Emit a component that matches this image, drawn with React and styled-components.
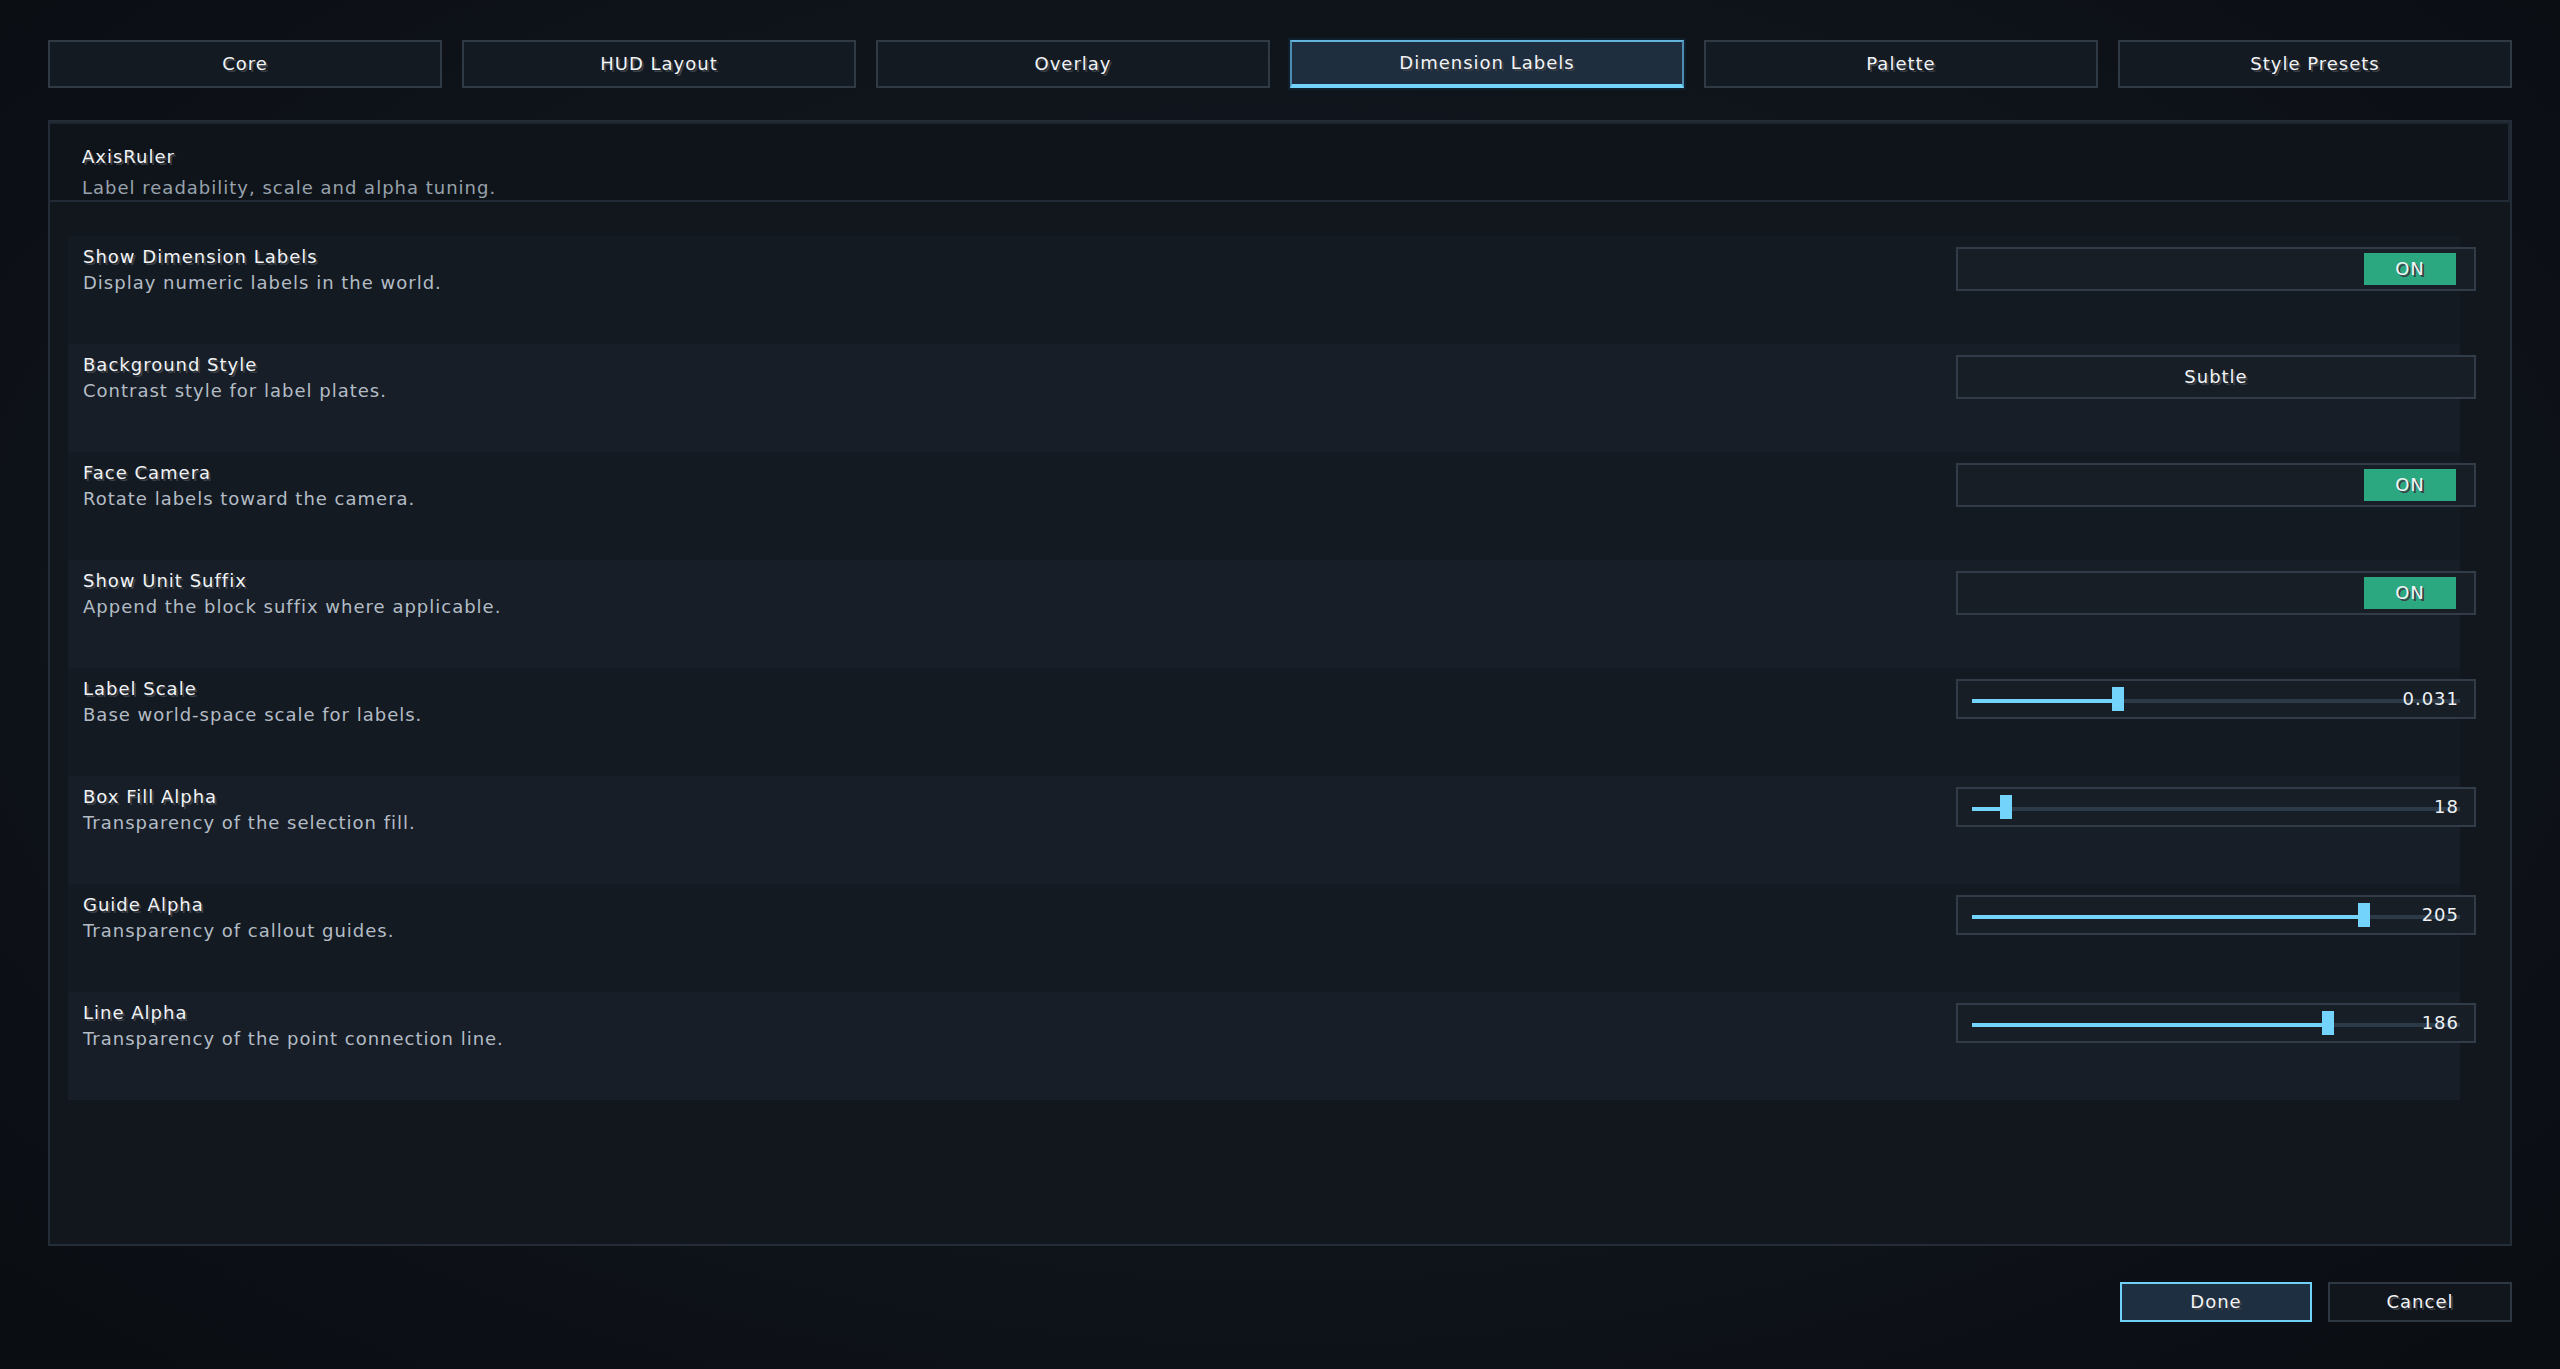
import React from 'react';
import styled, { createGlobalStyle, css } from 'styled-components';

//Page defaults
const GlobalStyle = createGlobalStyle`
   html, body {
      margin: 0;
      padding: 0;
      background: #0c1015;
   }
   * {
      box-sizing: border-box;
   }
`;

const tabs = ['Core', 'HUD Layout', 'Overlay', 'Dimension Labels', 'Palette', 'Style Presets'];

const settings = [
   { title: 'Show Dimension Labels', desc: 'Display numeric labels in the world.', type: 'toggle', value: 'ON' },
   { title: 'Background Style', desc: 'Contrast style for label plates.', type: 'cycle', value: 'Subtle' },
   { title: 'Face Camera', desc: 'Rotate labels toward the camera.', type: 'toggle', value: 'ON' },
   { title: 'Show Unit Suffix', desc: 'Append the block suffix where applicable.', type: 'toggle', value: 'ON' },
   { title: 'Label Scale', desc: 'Base world-space scale for labels.', type: 'slider', value: '0.031', fill: 0.3 },
   { title: 'Box Fill Alpha', desc: 'Transparency of the selection fill.', type: 'slider', value: '18', fill: 18 / 255 },
   { title: 'Guide Alpha', desc: 'Transparency of callout guides.', type: 'slider', value: '205', fill: 205 / 255 },
   { title: 'Line Alpha', desc: 'Transparency of the point connection line.', type: 'slider', value: '186', fill: 186 / 255 },
];

const Control = ({ item }) => {
   if (item.type === 'toggle') {
      return (
         <ToggleBox>
            <OnPill>{item.value}</OnPill>
         </ToggleBox>
      );
   }
   if (item.type === 'cycle') {
      return <CycleBox>{item.value}</CycleBox>;
   }
   return (
      <SliderBox>
         <Track>
            <Fill style={{ width: `${item.fill * 100}%` }} />
            <Thumb style={{ left: `calc(${item.fill * 100}% - 6px)` }} />
         </Track>
         <Value>{item.value}</Value>
      </SliderBox>
   );
};

const App = () => {
   const active = 'Dimension Labels';

   return (
      <>
         <GlobalStyle />
         <Screen>
            <TabBar>
               {tabs.map((name) => (
                  <Tab key={name} $active={name === active}>
                     {name}
                  </Tab>
               ))}
            </TabBar>
            <Panel>
               <Header>
                  <HeaderTitle>AxisRuler</HeaderTitle>
                  <HeaderDesc>Label readability, scale and alpha tuning.</HeaderDesc>
               </Header>
               <List>
                  {settings.map((item, i) => (
                     <Row key={item.title} $odd={i % 2 === 1}>
                        <Label>
                           <Title>{item.title}</Title>
                           <Desc>{item.desc}</Desc>
                        </Label>
                        <Control item={item} />
                     </Row>
                  ))}
               </List>
            </Panel>
            <Footer>
               <Button $primary>Done</Button>
               <Button $width={184}>Cancel</Button>
            </Footer>
         </Screen>
      </>
   );
};

const pixelText = css`
   font-family: 'DejaVu Sans', 'Liberation Sans', sans-serif;
   font-size: 18px;
   letter-spacing: 1px;
   line-height: 26px;
`;

const shadow = css`
   text-shadow: 2px 2px 0 #3c4047;
`;

const Screen = styled.div`
   ${pixelText};
   height: 100vh;
   display: flex;
   flex-direction: column;
   padding: 40px 48px 47px;
   background: radial-gradient(ellipse at 50% 45%, #131a23 0%, #0f141b 55%, #0a0d12 100%);
   color: #f2f4f6;
`;

const TabBar = styled.div`
   display: flex;
   gap: 20px;
   height: 48px;
`;

const Tab = styled.div`
   flex: 1;
   display: flex;
   align-items: center;
   justify-content: center;
   background: #131a22;
   border: 2px solid #2f3a45;
   ${shadow};
   ${(p) =>
      p.$active &&
      css`
         background: #1f2e3e;
         border-color: #4d8db0;
         border-top-color: #63b4dc;
         border-bottom: 4px solid #72d4fa;
         box-shadow: 0 0 0 2px #0f1f2b;
      `}
`;

const Panel = styled.div`
   flex: 1;
   margin-top: 32px;
   display: flex;
   flex-direction: column;
   background: #12171e;
   border: 2px solid #232c37;
`;

const Header = styled.div`
   height: 80px;
   padding: 20px 32px 0;
   background: #0f141a;
   border-top: 2px solid #1c242e;
   border-right: 2px solid #1f2832;
   border-bottom: 2px solid #212a35;
`;

const HeaderTitle = styled.div`
   ${shadow};
`;

const HeaderDesc = styled.div`
   margin-top: 5px;
   color: #98a2ac;
`;

const List = styled.div`
   padding: 34px 50px 0 18px;
`;

const Row = styled.div`
   height: 108px;
   display: flex;
   justify-content: space-between;
   align-items: flex-start;
   padding: 8px 0 0 15px;
   background: ${(p) => (p.$odd ? '#171e27' : '#141a22')};
`;

const Label = styled.div`
   display: flex;
   flex-direction: column;
`;

const Title = styled.div`
   ${shadow};
`;

const Desc = styled.div`
   color: #b3bcc5;
`;

const box = css`
   width: 520px;
   margin-top: 3px;
   margin-right: -16px;
   border: 2px solid #313c48;
   background: #171e26;
`;

const ToggleBox = styled.div`
   ${box};
   height: 44px;
   display: flex;
   justify-content: flex-end;
   align-items: center;
   padding-right: 18px;
`;

const OnPill = styled.div`
   width: 92px;
   height: 32px;
   display: flex;
   align-items: center;
   justify-content: center;
   background: #2ca880;
   ${shadow};
`;

const CycleBox = styled.div`
   ${box};
   height: 44px;
   display: flex;
   align-items: center;
   justify-content: center;
   ${shadow};
`;

const SliderBox = styled.div`
   ${box};
   position: relative;
   height: 40px;
   padding: 18px 14px 0;
`;

const Track = styled.div`
   position: relative;
   height: 4px;
   background: #2c3a48;
`;

const Fill = styled.div`
   position: absolute;
   left: 0;
   top: 0;
   bottom: 0;
   background: #74d3fa;
`;

const Thumb = styled.div`
   position: absolute;
   top: -12px;
   width: 12px;
   height: 24px;
   background: #74d3fa;
`;

const Value = styled.div`
   position: absolute;
   right: 15px;
   top: 5px;
   color: #eef2f5;
`;

const Footer = styled.div`
   display: flex;
   justify-content: flex-end;
   gap: 16px;
   margin-top: 36px;
   height: 40px;
`;

const Button = styled.div`
   width: ${(p) => p.$width || 192}px;
   display: flex;
   align-items: center;
   justify-content: center;
   background: ${(p) => (p.$primary ? '#1f2f42' : '#11161d')};
   border: 2px solid ${(p) => (p.$primary ? '#6fd0f8' : '#2e3742')};
   ${shadow};
`;

export default App;
